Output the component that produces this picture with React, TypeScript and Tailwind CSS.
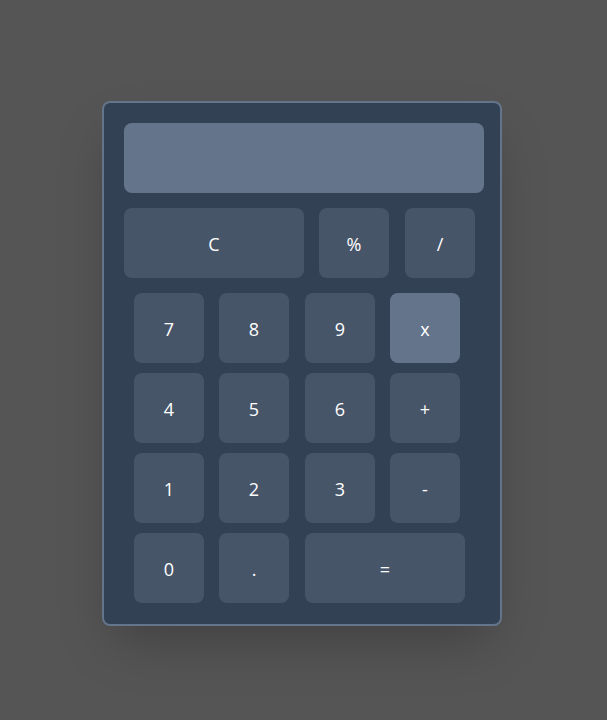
import React from "react";

const Btn = ({ label, w = "w-[70px]", bg = "bg-[#475569]", cls = "" }: { label: string; w?: string; bg?: string; cls?: string }) => (
  <button className={`${w} h-[70px] ${bg} rounded-lg text-white text-[18px] pt-[2px] flex items-center justify-center ${cls}`}>
    {label}
  </button>
);

export default function App() {
  return (
    <div className="min-h-[720px] w-[607px] bg-[#555555] pt-[101px] pl-[102px]" style={{ fontFamily: '"Open Sans", "Noto Sans", sans-serif' }}>
      <div className="w-[400px] h-[525px] bg-[#334155] border-2 border-[#64748b] rounded-lg shadow-2xl pt-[20px] pl-[20px]">
        <div className="w-[360px] h-[70px] bg-[#64748b] rounded-lg" />
        <div className="flex mt-[15px]">
          <Btn label="C" w="w-[180px]" />
          <Btn label="%" cls="ml-[15px]" />
          <Btn label="/" cls="ml-[16px]" />
        </div>
        <div className="pl-[10px]">
          <div className="flex mt-[15px]">
            <Btn label="7" />
            <Btn label="8" cls="ml-[15px]" />
            <Btn label="9" cls="ml-[16px]" />
            <Btn label="x" bg="bg-[#64748b]" cls="ml-[15px]" />
          </div>
          <div className="flex mt-[10px]">
            <Btn label="4" />
            <Btn label="5" cls="ml-[15px]" />
            <Btn label="6" cls="ml-[16px]" />
            <Btn label="+" cls="ml-[15px]" />
          </div>
          <div className="flex mt-[10px]">
            <Btn label="1" />
            <Btn label="2" cls="ml-[15px]" />
            <Btn label="3" cls="ml-[16px]" />
            <Btn label="-" cls="ml-[15px]" />
          </div>
          <div className="flex mt-[10px]">
            <Btn label="0" />
            <Btn label="." cls="ml-[15px]" />
            <Btn label="=" w="w-[160px]" cls="ml-[16px]" />
          </div>
        </div>
      </div>
    </div>
  );
}
